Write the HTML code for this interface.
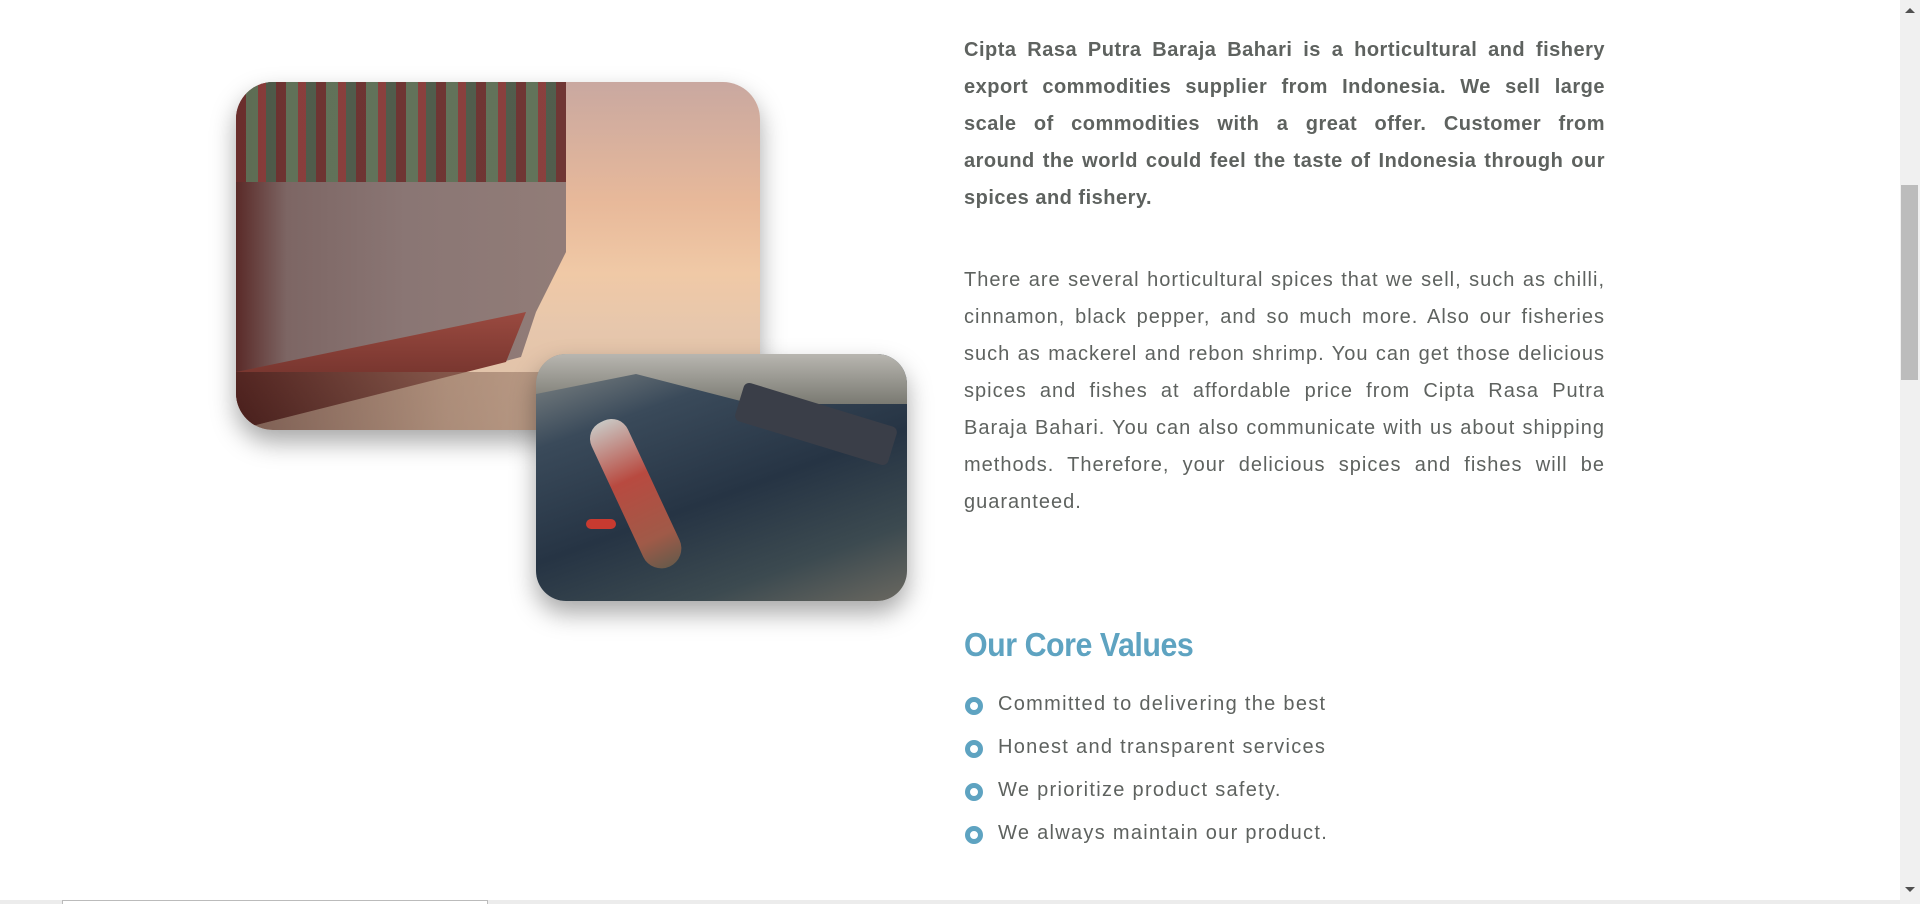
<!DOCTYPE html>
<html><head><meta charset="utf-8"><style>
html,body{margin:0;padding:0;width:1920px;height:904px;overflow:hidden;background:#fff;font-family:"Liberation Sans",sans-serif;}
.txt{position:absolute;left:964px;width:641px;color:#5e625f;text-align:justify;}
.b{top:32px;font-weight:bold;font-size:20px;line-height:37px;letter-spacing:0.5px;}
.b span{display:block;text-align:justify;text-align-last:justify;white-space:nowrap;}
.b span.l{text-align-last:left;}
.r{top:262px;font-size:20px;line-height:37px;letter-spacing:1px;}
h2{position:absolute;left:964px;top:626px;margin:0;font-size:33px;color:#5ea3c1;font-weight:bold;transform:scaleX(0.92);transform-origin:0 0;letter-spacing:-0.5px;white-space:nowrap;}
ul{position:absolute;left:964px;top:690px;margin:0;padding:0;list-style:none;}
li{height:43px;font-size:20px;color:#5e625f;position:relative;padding-left:34px;line-height:28px;letter-spacing:1.3px;white-space:nowrap;}
li:before{content:"";position:absolute;left:1px;top:7px;width:8px;height:8px;border:5px solid #5ea3c1;border-radius:50%;}
.sb{position:absolute;right:0;top:0;width:20px;height:904px;background:#f0f0f0;}
.th{position:absolute;right:2px;top:185px;width:17px;height:195px;background:#bcbcbc;}
.img1{position:absolute;left:236px;top:82px;width:524px;height:348px;border-radius:37px;overflow:hidden;box-shadow:0 12px 25px rgba(0,0,0,.35);
background:linear-gradient(180deg,#c9a8a0 0%,#e8b99a 35%,#f0c9a6 55%,#e7c7ac 70%,#dcbfa7 100%);}
.img2{position:absolute;left:536px;top:354px;width:371px;height:247px;border-radius:30px;overflow:hidden;box-shadow:0 12px 25px rgba(0,0,0,.35);
background:linear-gradient(160deg,#8b8f8c 0%,#3a4a5a 25%,#263444 55%,#3c4a50 80%,#6a6860 100%);}
</style></head><body>
<div class="img1">
<div style="position:absolute;left:0;top:0;width:340px;height:348px;background:linear-gradient(90deg,#5a2a28 0%,#7d6664 15%,#8a7674 50%,#927d78 100%);clip-path:polygon(0 0,330px 0,330px 170px,300px 230px,285px 275px,0 348px);"></div>
<div style="position:absolute;left:0;top:0;width:330px;height:100px;background:repeating-linear-gradient(90deg,#6c2e2c 0 10px,#5d7257 10px 22px,#8a3a38 22px 30px,#4a5a48 30px 40px);clip-path:polygon(0 0,330px 0,330px 160px,0 100px);opacity:.9"></div>
<div style="position:absolute;left:0;top:230px;width:320px;height:118px;background:linear-gradient(180deg,#9a4a40,#5a2420);clip-path:polygon(0 60px,290px 0,270px 50px,0 118px);"></div>
<div style="position:absolute;left:0;top:290px;width:524px;height:58px;background:linear-gradient(90deg,#3a1a18 0%,#8a6a5a 40%,#c8a890 100%);opacity:.6"></div>
</div>
<div class="img2">
<div style="position:absolute;left:0;top:0;width:371px;height:50px;background:linear-gradient(180deg,#b8b6b0,#7a7a72);clip-path:polygon(0 0,371px 0,371px 90px,100px 20px,0 40px);"></div>
<div style="position:absolute;left:200px;top:50px;width:160px;height:40px;background:#3a3e48;transform:rotate(17deg);border-radius:6px;"></div>
<div style="position:absolute;left:80px;top:60px;width:40px;height:160px;background:linear-gradient(180deg,#c9c6c2,#b84a40 40%,#a05a48 80%,#6a5a4a);transform:rotate(-25deg);border-radius:18px 18px 20px 20px;"></div>
<div style="position:absolute;left:50px;top:165px;width:30px;height:10px;background:#c83a30;border-radius:5px;"></div>
</div>
<div class="txt b"><span>Cipta Rasa Putra Baraja Bahari is a horticultural and fishery</span><span>export commodities supplier from Indonesia. We sell large</span><span>scale of commodities with a great offer. Customer from</span><span>around the world could feel the taste of Indonesia through our</span><span class="l">spices and fishery.</span></div>
<div class="txt r">There are several horticultural spices that we sell, such as chilli, cinnamon, black pepper, and so much more. Also our fisheries such as mackerel and rebon shrimp. You can get those delicious spices and fishes at affordable price from Cipta Rasa Putra Baraja Bahari. You can also communicate with us about shipping methods. Therefore, your delicious spices and fishes will be guaranteed.</div>
<h2>Our Core Values</h2>
<ul>
<li>Committed to delivering the best</li>
<li>Honest and transparent services</li>
<li>We prioritize product safety.</li>
<li>We always maintain our product.</li>
</ul>
<div class="sb"><div class="th"></div>
<div style="position:absolute;left:5px;top:8px;width:0;height:0;border-left:5px solid transparent;border-right:5px solid transparent;border-bottom:5px solid #505050"></div>
<div style="position:absolute;left:5px;top:887px;width:0;height:0;border-left:5px solid transparent;border-right:5px solid transparent;border-top:5px solid #505050"></div></div>
<div style="position:absolute;left:0;top:900px;width:1900px;height:4px;background:#ececec;"></div>
<div style="position:absolute;left:62px;top:900px;width:426px;height:4px;background:#fff;border:1px solid #bbb;border-bottom:0;box-sizing:border-box"></div>
</body></html>
